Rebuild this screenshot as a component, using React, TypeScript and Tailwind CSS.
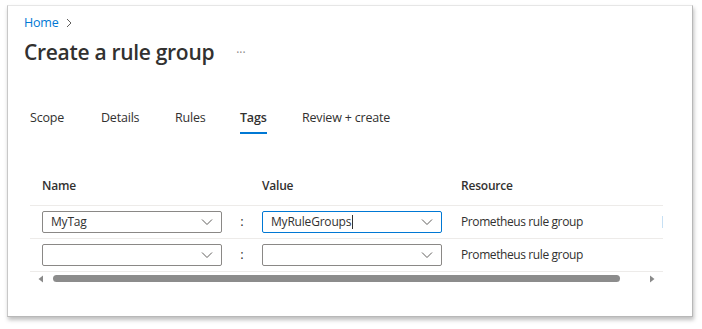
import React from "react";

const font = { fontFamily: '"Open Sans", "Noto Sans", sans-serif' };

function Chevron() {
  return (
    <svg width="12" height="8" viewBox="0 0 12 8" className="shrink-0">
      <path d="M1 1.5 L6 6.5 L11 1.5" fill="none" stroke="#605e5c" strokeWidth="1" />
    </svg>
  );
}

function Dropdown({ value, focused, caret }: { value?: string; focused?: boolean; caret?: boolean }) {
  return (
    <div
      className={
        "flex h-[22px] w-[180px] items-center justify-between rounded-[2px] border pl-[8px] pr-[8px] " +
        (focused ? "border-[#0078d4]" : "border-[#8a8886]")
      }
    >
      <span className="flex items-center text-[12px] leading-none tracking-[-0.2px] text-[#323130]">
        {value}
        {caret && <span className="ml-[1px] inline-block h-[14px] w-[1px] bg-[#323130]" />}
      </span>
      <Chevron />
    </div>
  );
}

function Row({ name, value, focused, mark }: { name?: string; value?: string; focused?: boolean; mark?: boolean }) {
  return (
    <div className="relative flex h-[33px] items-center border-t border-[#edebe9]">
      <div className="w-[12px]" />
      <Dropdown value={name} />
      <div className="flex w-[40px] justify-center text-[13px] text-[#323130]">:</div>
      <Dropdown value={value} focused={focused} caret={focused} />
      <div className="w-[19px]" />
      <div className="text-[12px] tracking-[-0.4px] text-[#323130]">Prometheus rule group</div>
      {mark && <div className="absolute right-[0px] top-[10px] h-[12px] w-[1px] bg-[#c7e0f4]" />}
    </div>
  );
}

const tabs: { t: string; w: string }[] = [
  { t: "Scope", w: "w-[71px]" },
  { t: "Details", w: "w-[74px]" },
  { t: "Rules", w: "w-[65px]" },
  { t: "Tags", w: "w-[62px]" },
  { t: "Review + create", w: "w-[110px]" },
];

export default function App() {
  return (
    <div className="h-[329px] w-[702px] bg-white pl-[7px] pt-[5px]" style={font}>
      <div className="h-[312px] w-[686px] border border-b-[#b8b8b8] border-l-[#c8c8c8] border-r-[#b8b8b8] border-t-[#e6e6e6] bg-white shadow-[1px_3px_4px_rgba(0,0,0,0.25)]">
        <div className="pl-[16px] pt-[9px]">
          <div className="flex h-[16px] items-center text-[12.5px] tracking-[-0.2px] text-[#0078d4]">
            <span>Home</span>
            <svg width="10" height="10" viewBox="0 0 10 10" className="ml-[5px]">
              <path d="M3 1 L7 5 L3 9" fill="none" stroke="#605e5c" strokeWidth="1" />
            </svg>
          </div>
          <div className="mt-[7px] flex h-[30px] items-center">
            <span className="text-[21px] font-semibold tracking-[-0.3px] text-[#323130]">Create a rule group</span>
            <span className="ml-[22px] text-[12px] text-[#8a8886]">···</span>
          </div>
        </div>
        <div className="ml-[22px] mt-[40px] flex h-[26px] items-start">
          {tabs.map(({ t, w }) => (
            <div key={t} className={"flex " + w}>
              <div
                className={
                  "flex h-[26px] items-start text-[12.5px] leading-[20px] tracking-[-0.2px] text-[#323130] " +
                  (t === "Tags" ? "border-b-2 border-[#0078d4] font-semibold" : "")
                }
              >
                {t}
              </div>
            </div>
          ))}
        </div>
        <div className="ml-[22px] mt-[39px] w-[633px]">
          <div className="flex h-[32px] items-end pb-[11px] text-[12px] font-semibold leading-[16px] tracking-[-0.2px] text-[#323130]">
            <div className="w-[232px] pl-[12px]">Name</div>
            <div className="w-[199px]">Value</div>
            <div>Resource</div>
          </div>
          <Row name="MyTag" value="MyRuleGroups" focused mark />
          <Row />
          <div className="flex h-[14px] items-center border-t border-[#edebe9]">
            <svg width="8" height="8" viewBox="0 0 8 8" className="ml-[7px]">
              <path d="M6 0.5 L1.5 4 L6 7.5 Z" fill="#8a8a8a" />
            </svg>
            <div className="ml-[8px] h-[7px] w-[567px] rounded-full bg-[#8c8c8c]" />
            <svg width="8" height="8" viewBox="0 0 8 8" className="ml-[28px]">
              <path d="M2 0.5 L6.5 4 L2 7.5 Z" fill="#8a8a8a" />
            </svg>
          </div>
        </div>
      </div>
    </div>
  );
}
